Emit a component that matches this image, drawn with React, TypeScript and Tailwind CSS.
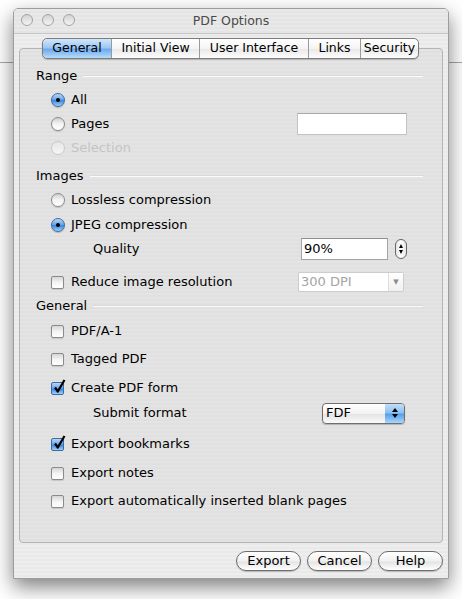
import React from "react";

function Radio({ checked, disabled }: { checked?: boolean; disabled?: boolean }) {
  if (checked) {
    return (
      <span className="relative flex h-[14px] w-[14px] shrink-0 items-center justify-center rounded-full border border-[#3b6aa6] bg-[linear-gradient(to_bottom,#b9d7f7_0%,#6aa6ea_45%,#3d86e0_55%,#9fd0f8_100%)] shadow-[0_1px_1px_rgba(0,0,0,0.2)]">
        <span className="h-[4px] w-[4px] rounded-full bg-black" />
      </span>
    );
  }
  if (disabled) {
    return (
      <span className="h-[14px] w-[14px] shrink-0 rounded-full border border-[#c9c9c9] bg-[linear-gradient(to_bottom,#e6e6e6,#f6f6f6)]" />
    );
  }
  return (
    <span className="h-[14px] w-[14px] shrink-0 rounded-full border border-[#8a8a8a] bg-[linear-gradient(to_bottom,#cfcfcf_0%,#f4f4f4_50%,#ffffff_100%)] shadow-[0_1px_1px_rgba(0,0,0,0.15)]" />
  );
}

function Checkbox({ checked }: { checked?: boolean }) {
  if (checked) {
    return (
      <span className="relative h-[13px] w-[13px] shrink-0 rounded-[2px] border border-[#3b6aa6] bg-[linear-gradient(to_bottom,#b9d7f7_0%,#6aa6ea_45%,#3d86e0_55%,#9fd0f8_100%)]">
        <svg className="absolute left-[1px] top-[-4px]" width="13" height="15" viewBox="0 0 13 15">
          <path d="M2 8.5 L4.8 12.5 L11.5 1" fill="none" stroke="#000" strokeWidth="2.2" strokeLinejoin="round" />
        </svg>
      </span>
    );
  }
  return (
    <span className="h-[13px] w-[13px] shrink-0 rounded-[2px] border border-[#8a8a8a] bg-[linear-gradient(to_bottom,#d6d6d6_0%,#f4f4f4_50%,#ffffff_100%)] shadow-[0_1px_1px_rgba(0,0,0,0.12)]" />
  );
}

function Section({ title }: { title: string }) {
  return (
    <div className="flex h-[24px] items-center pl-[16px] pr-[19px]">
      <span>{title}</span>
      <span className="ml-[6px] h-px flex-1 bg-[#fbfbfb] shadow-[0_-1px_0_#d9d9d9]" />
    </div>
  );
}

function Tab({ label, w, selected, first, last }: { label: string; w: string; selected?: boolean; first?: boolean; last?: boolean }) {
  return (
    <div
      className={
        "flex h-full items-center justify-center " +
        w +
        (selected
          ? " bg-[linear-gradient(to_bottom,#d2e7fc_0%,#9cc8f4_45%,#6eaaee_55%,#b6dcfa_100%)]"
          : " bg-[linear-gradient(to_bottom,#ffffff_0%,#f4f4f4_50%,#e9e9e9_55%,#fdfdfd_100%)]") +
        (first ? " rounded-l-[5px]" : " border-l border-[#9a9a9a]") +
        (last ? " rounded-r-[5px]" : "")
      }
    >
      {label}
    </div>
  );
}

function Button({ label }: { label: string }) {
  return (
    <div className="flex h-[20px] w-[65px] items-center justify-center rounded-full border border-[#6b6b6b] bg-[linear-gradient(to_bottom,#ffffff_0%,#f1f1f1_50%,#e4e4e4_55%,#ffffff_100%)] shadow-[0_1px_1px_rgba(0,0,0,0.2)]">
      {label}
    </div>
  );
}

export default function App() {
  return (
    <div className="relative h-[599px] w-[462px] overflow-hidden bg-white font-['DejaVu_Sans',sans-serif] text-[12px] text-black">
      <div className="absolute left-0 right-0 top-[62px] h-px bg-[#a8a8a8]" />
      <div className="relative pl-[13px] pt-[8px]">
        <div className="flex h-[571px] w-[436px] flex-col rounded-t-[5px] border border-[#9d9d9d] bg-[repeating-linear-gradient(to_bottom,#eeeeee_0px,#eeeeee_2px,#e9e9e9_2px,#e9e9e9_4px)] shadow-[0_8px_20px_rgba(0,0,0,0.5)]">
          {/* title bar */}
          <div className="relative flex h-[25px] shrink-0 items-center justify-center rounded-t-[4px] border-b border-[#c6c6c6] bg-[repeating-linear-gradient(to_bottom,#e9e9e9_0px,#e9e9e9_2px,#e4e4e4_2px,#e4e4e4_4px)] pt-[1px] text-[12.5px] text-[#4a4a4a]">
            <div className="absolute left-[7px] top-[5px] flex gap-[9px]">
              <span className="h-[12px] w-[12px] rounded-full border border-[#a3a3a3] bg-[linear-gradient(to_bottom,#d4d4d4,#f3f3f3)]" />
              <span className="h-[12px] w-[12px] rounded-full border border-[#a3a3a3] bg-[linear-gradient(to_bottom,#d4d4d4,#f3f3f3)]" />
              <span className="h-[12px] w-[12px] rounded-full border border-[#a3a3a3] bg-[linear-gradient(to_bottom,#d4d4d4,#f3f3f3)]" />
            </div>
            PDF Options
          </div>

          <div className="flex flex-1 flex-col px-[5px] pt-[4px]">
            {/* tabs */}
            <div className="relative z-10 flex justify-center pr-[1px]">
              <div className="flex h-[21px] rounded-[5px] border border-[#7b7b7b] text-[12.5px] shadow-[0_1px_1px_rgba(0,0,0,0.2)]">
                <Tab label="General" w="w-[68px]" selected first />
                <Tab label="Initial View" w="w-[88px]" />
                <Tab label="User Interface" w="w-[109px]" />
                <Tab label="Links" w="w-[52px]" />
                <Tab label="Security" w="w-[58px]" last />
              </div>
            </div>

            {/* panel */}
            <div className="-mt-[11px] flex h-[495px] w-[424px] flex-col rounded-[4px] border border-[#b4b4b4] bg-[repeating-linear-gradient(to_bottom,#e4e4e4_0px,#e4e4e4_2px,#e0e0e0_2px,#e0e0e0_4px)] pt-[15px] text-[13px]">
              <Section title="Range" />
              <div className="flex h-[24px] items-center gap-[6px] pl-[31px]">
                <Radio checked />
                <span>All</span>
              </div>
              <div className="flex h-[24px] items-center pl-[31px] pr-[35px]">
                <Radio />
                <span className="ml-[6px]">Pages</span>
                <span className="ml-auto h-[22px] w-[110px] border border-[#c3c3c3] border-t-[#a9a9a9] bg-white" />
              </div>
              <div className="flex h-[24px] items-center gap-[6px] pl-[31px] text-[#c4c4c4]">
                <Radio disabled />
                <span>Selection</span>
              </div>

              <div className="mt-[4px]">
                <Section title="Images" />
              </div>
              <div className="flex h-[24px] items-center gap-[6px] pl-[31px]">
                <Radio />
                <span>Lossless compression</span>
              </div>
              <div className="mt-[1px] flex h-[24px] items-center gap-[6px] pl-[31px]">
                <Radio checked />
                <span>JPEG compression</span>
              </div>
              <div className="flex h-[24px] items-center pl-[73px] pr-[35px]">
                <span>Quality</span>
                <span className="ml-auto flex h-[22px] w-[87px] items-center border border-[#a5a5a5] border-t-[#8e8e8e] bg-white pl-[2px]">90%</span>
                <span className="ml-[7px] flex h-[20px] w-[12px] flex-col items-center justify-center gap-[2px] rounded-[6px] border border-[#666] bg-[linear-gradient(to_right,#e6e6e6,#ffffff,#e6e6e6)]">
                  <span className="h-0 w-0 border-x-[2.5px] border-b-[4px] border-x-transparent border-b-black" />
                  <span className="h-0 w-0 border-x-[2.5px] border-t-[4px] border-x-transparent border-t-black" />
                </span>
              </div>
              <div className="mt-[9px] flex h-[24px] items-center pl-[31px] pr-[38px]">
                <Checkbox />
                <span className="ml-[7px]">Reduce image resolution</span>
                <span className="ml-auto flex h-[20px] w-[106px] items-center rounded-[2px] border border-[#cdcdcd] bg-white text-[#a4a4a4]">
                  <span className="flex-1 pl-[2px]">300 DPI</span>
                  <span className="flex h-full w-[15px] items-center justify-center border-l border-[#dddddd] bg-[linear-gradient(to_bottom,#ffffff,#f0f0f0)] text-[7px] text-[#8c8c8c]">▼</span>
                </span>
              </div>

              <Section title="General" />
              <div className="flex h-[26px] items-center pl-[31px]">
                <Checkbox />
                <span className="ml-[7px]">PDF/A-1</span>
              </div>
              <div className="mt-[2px] flex h-[26px] items-center pl-[31px]">
                <Checkbox />
                <span className="ml-[7px]">Tagged PDF</span>
              </div>
              <div className="mt-[3px] flex h-[26px] items-center pl-[31px]">
                <Checkbox checked />
                <span className="ml-[7px]">Create PDF form</span>
              </div>
              <div className="flex h-[24px] items-center pl-[73px] pr-[37px]">
                <span>Submit format</span>
                <span className="ml-auto flex h-[21px] w-[83px] items-center overflow-hidden rounded-[4px] border border-[#6e6e6e] bg-[linear-gradient(to_bottom,#ffffff_0%,#f2f2f2_50%,#e5e5e5_55%,#fafafa_100%)] shadow-[0_1px_1px_rgba(0,0,0,0.2)]">
                  <span className="flex-1 pl-[3px]">FDF</span>
                  <span className="flex h-full w-[19px] flex-col items-center justify-center gap-[2px] bg-[linear-gradient(to_bottom,#c3def9_0%,#8cc0f2_45%,#5a9fe9_55%,#a9d6fa_100%)]">
                    <span className="h-0 w-0 border-x-[3px] border-b-[4px] border-x-transparent border-b-black" />
                    <span className="h-0 w-0 border-x-[3px] border-t-[4px] border-x-transparent border-t-black" />
                  </span>
                </span>
              </div>
              <div className="mt-[6px] flex h-[26px] items-center pl-[31px]">
                <Checkbox checked />
                <span className="ml-[7px]">Export bookmarks</span>
              </div>
              <div className="mt-[3px] flex h-[26px] items-center pl-[31px]">
                <Checkbox />
                <span className="ml-[7px]">Export notes</span>
              </div>
              <div className="mt-[2px] flex h-[26px] items-center pl-[31px]">
                <Checkbox />
                <span className="ml-[7px]">Export automatically inserted blank pages</span>
              </div>
            </div>

            {/* buttons */}
            <div className="mt-[8px] flex justify-end gap-[6px] text-[13px]">
              <Button label="Export" />
              <Button label="Cancel" />
              <Button label="Help" />
            </div>
          </div>
        </div>
      </div>
    </div>
  );
}
